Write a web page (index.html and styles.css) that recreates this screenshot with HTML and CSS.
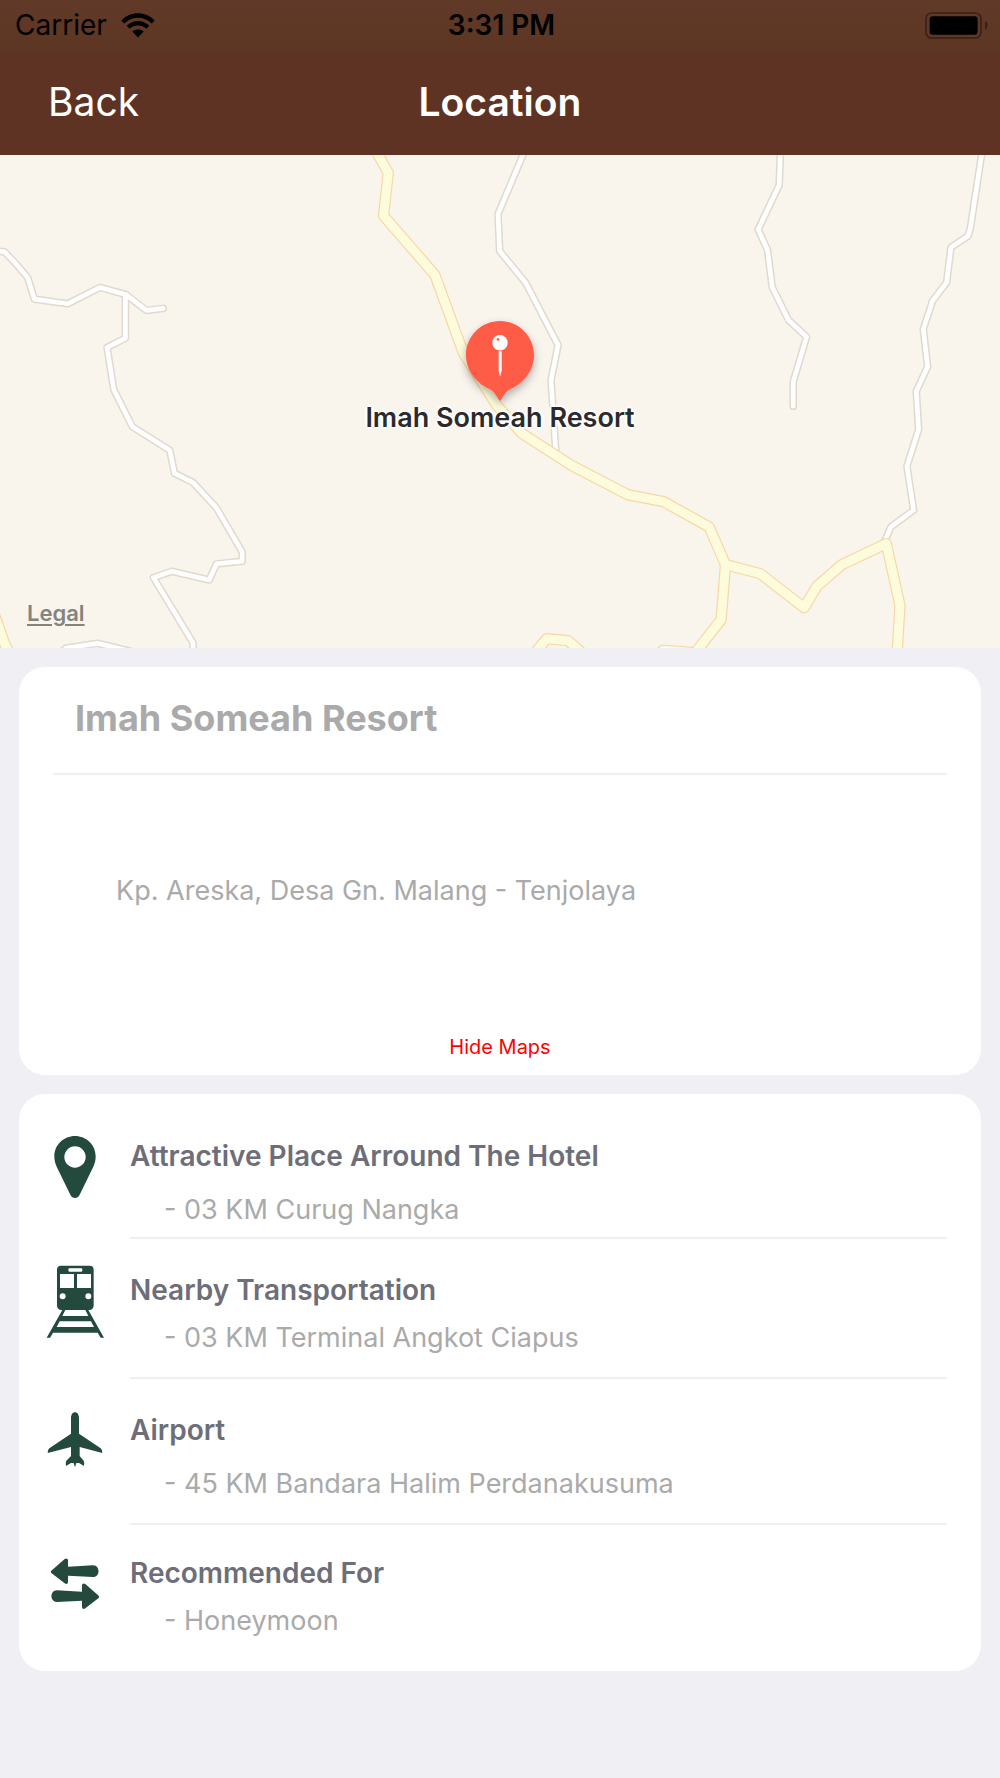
FILE: index.html
```html
<!DOCTYPE html>
<html lang="en">
<head>
  <meta charset="UTF-8">
  <meta name="viewport" content="width=device-width, initial-scale=1">
  <title>Location</title>
  <link rel="stylesheet" href="styles.css">
</head>
<body>
  <header class="header">
    <div class="status-bar">
      <div class="status-left">
        <span>Carrier</span>
        <svg class="wifi" viewBox="0 0 102 74" aria-hidden="true">
          <path d="M1 22C29-7 73-7 101 22L92 31C69 8 33 8 10 31Z"/>
          <path d="M17 38C36 19 66 19 85 38L76 47C62 34 40 34 26 47Z"/>
          <path d="M34 55C44 47 58 47 68 55L51 73Z"/>
        </svg>
      </div>
      <span class="status-time">3:31 PM</span>
      <svg class="battery" viewBox="0 0 189 81" aria-hidden="true">
        <rect x="3" y="3" width="165" height="75" rx="17" fill="none" stroke="#3a2118" stroke-width="5"/>
        <rect x="14" y="13" width="144" height="55" rx="9"/>
        <path d="M180 26Q188 31 188 40T180 55Z" fill="#3a2118"/>
      </svg>
    </div>
    <nav class="nav-bar">
      <button type="button" class="btn-back">Back</button>
      <h1 class="nav-title">Location</h1>
    </nav>
  </header>

  <main>
    <section class="map" id="map">
      <svg class="map-canvas" viewBox="0 15 3000 1478" preserveAspectRatio="xMidYMid slice" aria-hidden="true">
        <defs>
          <g id="small-roads">
            <path d="M-20 302L14 305L48 340L84 382L104 447L204 461L301 412L378 433L440 481L490 475"/>
            <path d="M377 433V564L322 592L342 718L398 830L510 900L524 969L580 997L650 1073L727 1205V1233L650 1241L628 1289L516 1263L461 1282L580 1478V1520"/>
            <path d="M180 1510L200 1493L293 1479L410 1507"/>
            <path d="M1575 0L1494 192L1499 303L1577 398L1674 585L1653 690L1668 915"/>
            <path d="M2341 0L2337 105L2274 238L2302 300L2316 411L2365 510L2419 560L2379 695V768"/>
            <path d="M2946 0L2910 235L2903 258L2852 292L2839 397L2797 452L2769 537L2782 650L2748 723L2755 838L2720 948L2740 1080L2672 1130L2650 1180"/>
          </g>
          <g id="main-roads">
            <path d="M1115 -20L1165 68L1151 197L1305 375L1390 608L1490 765L1566 850L1715 946L1882 1033L1990 1054L2127 1130L2176 1243L2280 1270L2412 1372L2450 1308L2525 1243L2658 1180L2699 1365L2690 1520"/>
            <path d="M2176 1243L2163 1408L2075 1520"/>
            <path d="M1960 1520L1990 1500L2085 1507"/>
            <path d="M1595 1520L1640 1465L1704 1471L1760 1520"/>
            <path d="M-20 1380L15 1480L35 1520"/>
          </g>
          <filter id="pin-shadow" x="-30%" y="-30%" width="160%" height="160%">
            <feDropShadow dx="0" dy="12" stdDeviation="12" flood-color="#000" flood-opacity="0.3"/>
          </filter>
        </defs>
        <use href="#small-roads" class="road road-small-edge"/>
        <use href="#small-roads" class="road road-small"/>
        <use href="#main-roads" class="road road-main-edge"/>
        <use href="#main-roads" class="road road-main"/>
        <g transform="translate(1050 450)">
          <path d="M450 63C506 63 552 108 552 165C552 209 522 247 486 264C468 272 462 285 450 303C438 285 432 272 414 264C378 247 348 209 348 165C348 108 394 63 450 63Z" fill="#ff5b47" filter="url(#pin-shadow)"/>
          <circle cx="450" cy="128" r="23" fill="#fff"/>
          <circle cx="444" cy="118" r="4" fill="#ff5b47"/>
          <path d="M446 153H455V212L450 230L446 212Z" fill="#fff"/>
        </g>
      </svg>
      <span class="map-label">Imah Someah Resort</span>
      <a class="map-legal" href="#">Legal</a>
    </section>

    <section class="card hotel">
      <h2 class="hotel-name">Imah Someah Resort</h2>
      <p class="hotel-address">Kp. Areska, Desa Gn. Malang - Tenjolaya</p>
      <button type="button" class="btn-maps">Hide Maps</button>
    </section>

    <section class="card info">
      <div class="info-row loose first">
        <svg class="info-icon" viewBox="0 0 174 222" aria-hidden="true">
          <path fill-rule="evenodd" d="M87 3C121 3 149 30 149 64C149 76 147 84 142 95L101 179C95 192 79 192 73 179L32 95C27 84 25 76 25 64C25 30 53 3 87 3ZM87 34A32 32 0 1 0 87 98A32 32 0 1 0 87 34Z"/>
        </svg>
        <div class="info-text">
          <h3>Attractive Place Arround The Hotel</h3>
          <p>- 03 KM Curug Nangka</p>
        </div>
      </div>
      <div class="info-row">
        <svg class="info-icon tall" viewBox="0 0 174 222" aria-hidden="true">
          <path fill-rule="evenodd" d="M45 2H131Q143 2 143 14V121Q143 135 129 135H47Q33 135 33 121V14Q33 2 45 2ZM70 10Q67 10 67 14V16Q67 20 70 20H106Q109 20 109 16V14Q109 10 106 10ZM42 27V69H84V27ZM93 27V69H135V27ZM50 85A9 9 0 1 0 50 103A9 9 0 1 0 50 85ZM127 85A9 9 0 1 0 127 103A9 9 0 1 0 127 85Z"/>
          <path fill-rule="evenodd" d="M49 135H127L174 218H164L155 203H21L12 218H2ZM58 135L49 153H127L118 135ZM41 169L32 186H144L135 169Z"/>
        </svg>
        <div class="info-text">
          <h3>Nearby Transportation</h3>
          <p>- 03 KM Terminal Angkot Ciapus</p>
        </div>
      </div>
      <div class="info-row loose">
        <svg class="info-icon" viewBox="0 0 174 222" aria-hidden="true">
          <path d="M87 1C94 1 99 7 99 20V65L164 109Q170 114 169 123L101 105V132L113 146Q116 152 114 162L99 153H91L87 166L83 153H75L60 162Q58 152 61 146L75 132V105L5 123Q4 114 10 109L75 65V20C75 7 80 1 87 1Z"/>
        </svg>
        <div class="info-text">
          <h3>Airport</h3>
          <p>- 45 KM Bandara Halim Perdanakusuma</p>
        </div>
      </div>
      <div class="info-row">
        <svg class="info-icon" viewBox="0 0 174 222" aria-hidden="true">
          <path d="M16 38L56 3Q65-2 66 7V26L141 22C163 22 163 57 141 57L66 53V72Q65 81 56 76L16 45Q13 41 16 38Z"/>
          <path d="M158 113L118 78Q109 73 108 82V101L33 97C11 97 11 132 33 132L108 128V147Q109 156 118 151L158 120Q161 116 158 113Z"/>
        </svg>
        <div class="info-text">
          <h3>Recommended For</h3>
          <p>- Honeymoon</p>
        </div>
      </div>
    </section>
  </main>
</body>
</html>
```

FILE: styles.css
```css
* { box-sizing: border-box; }
body { margin: 0; background: #efeff4; font-family: Inter, Roboto, sans-serif; font-size: 27px; line-height: 32px; color: #aaa; }
h1, h2, h3, p { margin: 0; }
button { padding: 0; border: 0; background: none; font-family: inherit; cursor: pointer; }
svg { display: block; flex: none; }

/* header */
.header { background: #5e3323; color: #fff; }
.status-bar { display: grid; grid-template-columns: 1fr auto 1fr; align-items: center; height: 54px; padding: 0 12px 4px 15px; background: linear-gradient(#613928, #5c3623); color: #000; font-size: 28px; }
.status-left { display: flex; align-items: center; gap: 14px; }
.wifi { width: 34px; height: 25px; }
.status-time { font-weight: 600; }
.battery { width: 63px; height: 27px; justify-self: end; }
.nav-bar { display: grid; grid-template-columns: 1fr auto 1fr; align-items: center; height: 101px; padding: 0 48px 5px; }
.btn-back { justify-self: start; color: #fff; font-size: 39px; line-height: 48px; }
.nav-title { font-size: 39px; line-height: 48px; font-weight: 600; }

/* map */
.map { position: relative; aspect-ratio: 1000 / 493; background: #f9f4ec; overflow: hidden; }
.map-canvas { width: 100%; height: 100%; }
.road { fill: none; stroke-linecap: round; stroke-linejoin: round; }
.road-small-edge { stroke: #e0d9cf; stroke-width: 23px; }
.road-small { stroke: #fff; stroke-width: 14px; }
.road-main-edge { stroke: #f8d7a5; stroke-width: 34px; }
.road-main { stroke: #fcfbdc; stroke-width: 27px; }
.map-label { position: absolute; top: 50%; left: 50%; transform: translateX(-50%); white-space: nowrap; color: #2b2b2d; font-weight: 600; text-shadow: 0 0 3px #fff, 0 0 3px #fff, 2px 0 2px #fff, -2px 0 2px #fff, 0 2px 2px #fff, 0 -2px 2px #fff; }
.map-legal { position: absolute; left: 27px; bottom: 19px; color: #85837e; font-size: 22px; font-weight: 600; text-underline-offset: 3px; }

/* cards */
.card { margin: 19px; border-radius: 26px; background: #fff; }
.hotel { display: flex; flex-direction: column; padding: 0 34px 12px; }
.hotel-name { padding: 30px 22px 34px; border-bottom: 2px solid #efeff4; font-size: 36px; line-height: 42px; font-weight: 700; }
.hotel-address { padding: 100px 63px 124px; }
.btn-maps { align-self: center; color: #f00; font-size: 20px; line-height: 32px; }

/* info list */
.info { padding: 0 34px 4px 27px; }
.info-row { display: flex; gap: 26px; }
.info-icon { width: 58px; height: 74px; margin-top: 33px; fill: #244a3d; }
.info-icon.tall { margin-top: 26px; }
.info-text { flex: 1; padding: 35px 0 23px; border-bottom: 2px solid #efeff4; }
.info-text h3 { color: #6d6e78; font-size: 28px; font-weight: 600; }
.info-text p { padding: 16px 34px 0; }
.loose .info-text p { padding-top: 22px; }
.first .info-icon { margin-top: 41px; }
.first .info-text { padding: 46px 0 11px; }
.info-row:last-child .info-text { padding: 32px 0 30px; border-bottom: 0; }
```
